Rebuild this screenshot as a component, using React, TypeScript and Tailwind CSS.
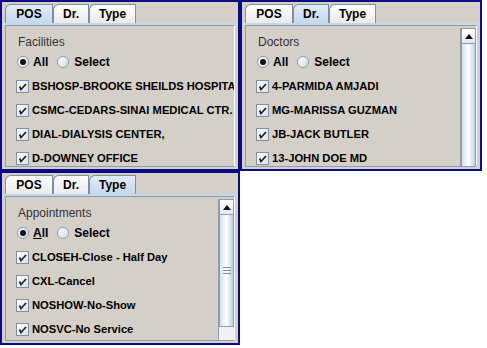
import React from "react";

const NAVY = "border-[#0b0b83]";

function Tab({ label, selected }: { label: string; selected?: boolean }) {
  return (
    <div
      className={`h-[19px] flex items-center justify-center rounded-tl-[6px] border border-b-0 border-[#7f8fa3] text-[12px] font-bold text-black ${
        selected ? "bg-gradient-to-b from-[#e2ecf7] to-[#c4d8ee]" : "bg-gradient-to-b from-white to-[#eaeaea]"
      }`}
    >
      {label}
    </div>
  );
}

function Radio({ checked }: { checked?: boolean }) {
  return (
    <div className="w-[12px] h-[12px] rounded-full border border-[#8e9cab] bg-gradient-to-br from-white to-[#cfdcea] flex items-center justify-center">
      {checked && <div className="w-[6px] h-[6px] rounded-full bg-[#111]" />}
    </div>
  );
}

function Check() {
  return (
    <div className="w-[13px] h-[13px] shrink-0 border border-[#7f8fa3] bg-gradient-to-br from-white to-[#d6e2ef] flex items-center justify-center">
      <svg width="9" height="9" viewBox="0 0 9 9">
        <path d="M1.5 4.5 L3 7.5 L8 2" stroke="#222" strokeWidth="1.7" fill="none" />
      </svg>
    </div>
  );
}

function ScrollBar({ grip }: { grip?: boolean }) {
  return (
    <div className="w-[16px] flex flex-col border-l border-[#8e9cab] mt-[2px]">
      <div className="h-[16px] shrink-0 flex items-center justify-center bg-gradient-to-b from-white to-[#e4e8ee] border border-[#8e9cab]">
        <svg width="8" height="5" viewBox="0 0 8 5">
          <path d="M0 5 L4 0 L8 5 Z" fill="#111" />
        </svg>
      </div>
      <div className="flex-1 flex flex-col">
        <div
          className={`flex items-center justify-center bg-gradient-to-r from-[#d2e0ef] via-white to-[#bcd1e8] border-x border-[#8e9cab] ${
            grip ? "h-[112px] border-b" : "flex-1"
          }`}
        >
          {grip && (
            <div className="flex flex-col gap-[2px] w-[8px]">
              <div className="h-px bg-[#7f8fa3]" />
              <div className="h-px bg-[#7f8fa3]" />
              <div className="h-px bg-[#7f8fa3]" />
            </div>
          )}
        </div>
        {grip && <div className="flex-1 bg-[#eef2f7]" />}
      </div>
    </div>
  );
}

function Panel({
  selected,
  title,
  items,
  scroll,
  grip,
  underline,
}: {
  selected: number;
  title: string;
  items: string[];
  scroll?: boolean;
  grip?: boolean;
  underline?: boolean;
}) {
  return (
    <div className={`border-2 ${NAVY} bg-[#d4d0c8] flex flex-col overflow-hidden`}>
      <div className="flex pl-[3px] pt-[2px]">
        <div className="w-[48px]">
          <Tab label="POS" selected={selected === 0} />
        </div>
        <div className="w-[36px]">
          <Tab label="Dr." selected={selected === 1} />
        </div>
        <div className="w-[47px]">
          <Tab label="Type" selected={selected === 2} />
        </div>
      </div>
      <div className="flex-1 flex flex-col border-t-2 border-[#c4d8ee] pl-[3px] pr-[3px] pb-[2px] min-h-0">
        <div className="flex-1 flex border border-[#8e9cab] border-r-white min-h-0">
          <div className="flex-1 flex flex-col pl-[10px] pt-[9px] overflow-hidden whitespace-nowrap">
            <div className="h-[15px] shrink-0 leading-[14px] text-[12px] text-[#333] pl-[2px]">{title}</div>
            <div className="h-[24px] shrink-0 flex items-center text-[12px] font-bold text-black pl-px">
              <Radio checked />
              <span className="ml-[4px]">
                {underline ? (
                  <>
                    <span className="underline">A</span>ll
                  </>
                ) : (
                  "All"
                )}
              </span>
              <div className="ml-[9px]">
                <Radio />
              </div>
              <span className="ml-[5px]">Select</span>
            </div>
            {items.map((it) => (
              <div key={it} className="h-[24px] flex items-center text-[11.2px] font-bold text-black shrink-0">
                <Check />
                <span className="ml-[3px]">{it}</span>
              </div>
            ))}
          </div>
          {scroll && <ScrollBar grip={grip} />}
        </div>
      </div>
    </div>
  );
}

export default function App() {
  return (
    <div className="w-[487px] h-[348px] bg-white" style={{ fontFamily: '"Liberation Sans", Arial, sans-serif' }}>
      <div className="grid grid-cols-[240px_242px] grid-rows-[171px_174px]">
        <Panel
          selected={0}
          title="Facilities"
          items={["BSHOSP-BROOKE SHEILDS HOSPITAL", "CSMC-CEDARS-SINAI MEDICAL CTR.", "DIAL-DIALYSIS CENTER,", "D-DOWNEY OFFICE"]}
        />
        <Panel
          selected={1}
          title="Doctors"
          scroll
          items={["4-PARMIDA AMJADI", "MG-MARISSA GUZMAN", "JB-JACK BUTLER", "13-JOHN DOE MD"]}
        />
        <Panel
          selected={2}
          title="Appointments"
          scroll
          grip
          underline
          items={["CLOSEH-Close - Half Day", "CXL-Cancel", "NOSHOW-No-Show", "NOSVC-No Service"]}
        />
      </div>
    </div>
  );
}
